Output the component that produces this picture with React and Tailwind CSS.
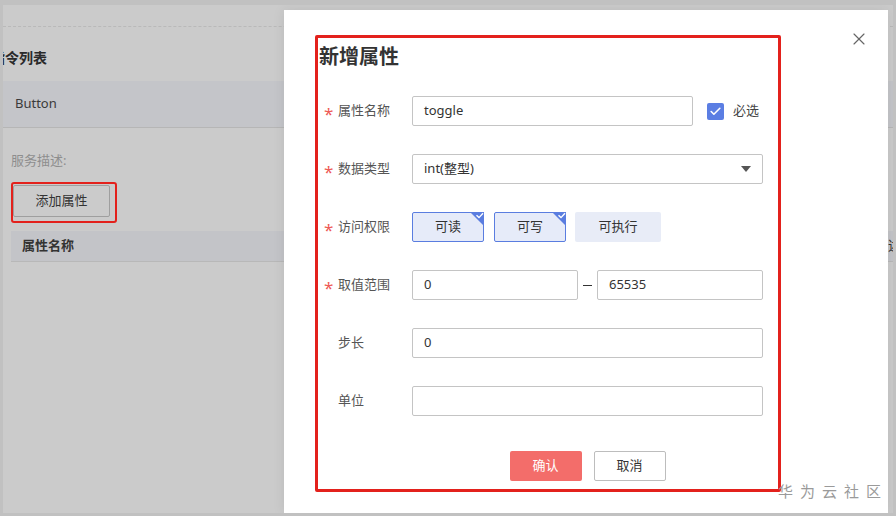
import React from 'react';
import { X, Check } from 'lucide-react';

const font = { fontFamily: '"Noto Sans", "Noto Sans CJK SC", sans-serif' };

const Star = () => (
  <span className="w-[14px] text-[#ee5a55] text-[17px] leading-none pt-[5px]">*</span>
);

const Label = ({ text, required }) => (
  <div className="w-[94px] flex items-center pl-[6px] h-[30px]">
    {required ? <Star /> : <span className="w-[14px]" />}
    <span className="text-[13px] text-[#555]">{text}</span>
  </div>
);

const Input = ({ value, className = '' }) => (
  <div className={`h-[30px] border border-[#c4c4c4] rounded-[2px] bg-white flex items-center px-[11px] text-[13px] text-[#333] ${className}`}>
    {value}
  </div>
);

const Corner = () => (
  <svg className="absolute -top-px -right-px" width="14" height="14" viewBox="0 0 14 14">
    <polygon points="0,0 14,0 14,14" fill="#5a7de0" />
    <path d="M6.5 3.2 L9 5.6 L13 1.2" stroke="#fff" strokeWidth="1.4" fill="none" />
  </svg>
);

const Perm = ({ text, on, w }) => (
  <div
    className={`relative h-[30px] flex items-center justify-center text-[13px] text-[#333] rounded-[2px] ${
      on ? 'border border-[#5a7de0] bg-[#e6ebf9]' : 'bg-[#e8ecf7]'
    } ${w}`}
  >
    {text}
    {on && <Corner />}
  </div>
);

export default function App() {
  return (
    <div style={font} className="relative w-[896px] h-[516px] overflow-hidden bg-[#cbcbcb] border-l-[3px] border-r-[3px] border-t-[5px] border-b-[3px] border-[#c1c1c1]">
      {/* dimmed page behind */}
      <div className="flex flex-col">
        <div className="h-[22px] border-b border-dashed border-[#b9b9b9]" />
        <div className="h-[54px] pt-[6px] flex items-center overflow-hidden">
          <span className="ml-[-12px] text-[14px] font-bold text-[#2a2a2a]">指令列表</span>
        </div>
        <div className="h-[47px] flex items-center pl-[12px] bg-[#c4c5c9] border-b border-[#b6b6b6] text-[13px] text-[#3a3a3a]">
          Button
        </div>
        <div className="mt-[22px] h-[20px] leading-[20px] pl-[8px] text-[13px] text-[#8e8e8e]">服务描述:</div>
        <div className="pl-[8px] mt-[12px] flex">
          <div className="border-[2px] border-[#e3211c] rounded-[3px] pt-px pr-[5px] pb-[4px]">
            <div className="w-[97px] h-[32px] border border-[#9f9f9f] rounded-[2px] flex items-center justify-center text-[13px] text-[#333]">
              添加属性
            </div>
          </div>
        </div>
        <div className="ml-[8px] mt-[8px] h-[31px] bg-[#c3c4c8] border-b border-[#b8b8b8] flex items-center justify-between pl-[11px] text-[13px] font-bold text-[#333]">
          <span>属性名称</span>
          <span className="mr-[-8px] font-normal">描述</span>
        </div>
      </div>

      {/* modal */}
      <div className="absolute left-[281px] top-[5px] w-[604px] h-[503px] bg-white shadow-[0_0_12px_rgba(0,0,0,0.08)]">
        <button className="absolute left-[565px] top-[19px] text-[#666]">
          <X size={20} strokeWidth={1.4} />
        </button>

        <div className="ml-[31px] mt-[25px] w-[466px] h-[457px] border-[3px] border-[#e3211c] rounded-[2px] flex flex-col">
          <div className="pl-[1px] pt-[7px] h-[31px] text-[20px] leading-[24px] font-bold text-[#333]">新增属性</div>

          <div className="mt-[27px] flex flex-col gap-[28px]">
            <div className="flex items-center">
              <Label text="属性名称" required />
              <Input value="toggle" className="w-[281px]" />
              <div className="ml-[14px] w-[17px] h-[17px] rounded-[2px] bg-[#5b7ee3] flex items-center justify-center">
                <Check size={13} strokeWidth={3} color="#fff" />
              </div>
              <span className="ml-[9px] text-[13px] text-[#444]">必选</span>
            </div>

            <div className="flex items-center">
              <Label text="数据类型" required />
              <div className="w-[351px] h-[30px] border border-[#c4c4c4] rounded-[2px] flex items-center justify-between px-[11px] text-[13px] text-[#333]">
                <span>int(整型)</span>
                <svg width="10" height="6" viewBox="0 0 10 6">
                  <polygon points="0,0 10,0 5,6" fill="#555" />
                </svg>
              </div>
            </div>

            <div className="flex items-center">
              <Label text="访问权限" required />
              <div className="flex gap-[10px]">
                <Perm text="可读" on w="w-[72px]" />
                <Perm text="可写" on w="w-[72px]" />
                <Perm text="可执行" w="w-[86px] -ml-px" />
              </div>
            </div>

            <div className="flex items-center">
              <Label text="取值范围" required />
              <Input value="0" className="w-[166px]" />
              <div className="w-[19px] flex justify-center">
                <div className="w-[9px] h-px bg-[#333]" />
              </div>
              <Input value="65535" className="w-[166px]" />
            </div>

            <div className="flex items-center">
              <Label text="步长" />
              <Input value="0" className="w-[351px]" />
            </div>

            <div className="flex items-center">
              <Label text="单位" />
              <Input value="" className="w-[351px]" />
            </div>
          </div>

          <div className="mt-[35px] flex">
            <div className="w-[94px]" />
            <div className="w-[351px] flex justify-center gap-[12px]">
              <div className="w-[72px] h-[30px] rounded-[2px] bg-[#f36d6a] text-white text-[13px] flex items-center justify-center">确认</div>
              <div className="w-[72px] h-[30px] rounded-[2px] border border-[#bdbdbd] text-[#333] text-[13px] flex items-center justify-center">取消</div>
            </div>
          </div>
        </div>

        <div className="absolute left-[494px] top-[471px] whitespace-nowrap text-[15px] leading-[20px] tracking-[7px] text-[#9a9a9a]">华为云社区</div>
      </div>
    </div>
  );
}
